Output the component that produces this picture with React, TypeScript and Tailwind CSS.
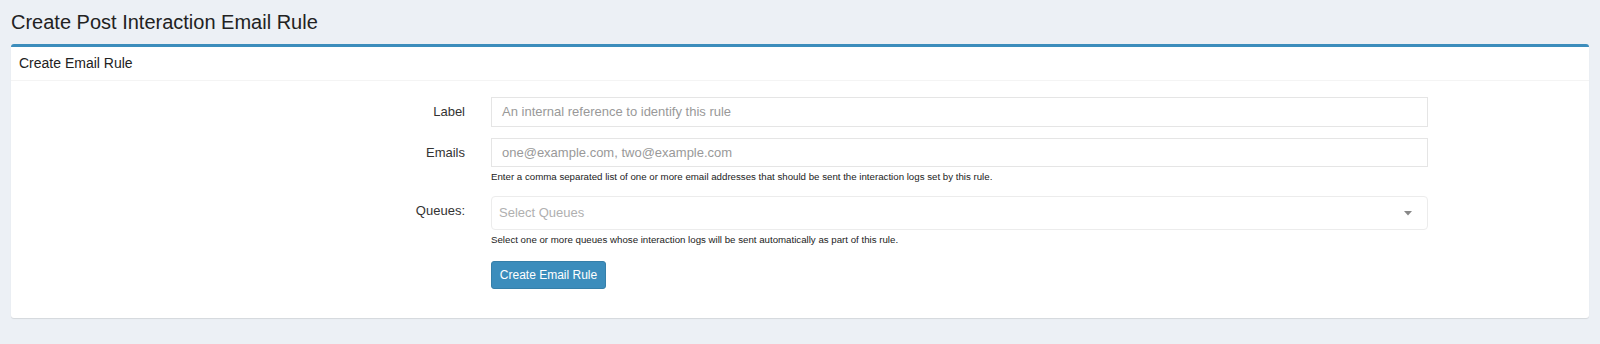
import React from 'react';

function FormRow({ label, children }: { label: string; children: React.ReactNode }) {
  return (
    <div className="flex items-start">
      <div className="w-[454px] shrink-0 text-right text-[13px] text-[#333] leading-[30px]">{label}</div>
      <div className="ml-[26px] w-[937px]">{children}</div>
    </div>
  );
}

export default function App() {
  return (
    <div
      className="min-h-[344px] w-full bg-[#ecf0f5] px-[11px] pt-[10px] pb-[27px] text-[#333]"
      style={{ fontFamily: '"Liberation Sans", Arial, Helvetica, sans-serif' }}
    >
      <h1 className="text-[20px] leading-[24px] text-[#222]">Create Post Interaction Email Rule</h1>

      <div className="mt-[10px] rounded-[3px] border-t-[3px] border-[#3c8dbc] bg-white shadow-[0_1px_1px_rgba(0,0,0,0.1)]">
        <div className="h-[34px] border-b border-[#f4f4f4] px-[8px] text-[14px] leading-[32px] text-[#222]">
          Create Email Rule
        </div>

        <div className="flex flex-col pt-[16px] pb-[29px]">
          <FormRow label="Label">
            <div className="h-[30px] border border-[#e5e5e5] px-[10px] text-[13px] leading-[28px] text-[#999]">
              An internal reference to identify this rule
            </div>
          </FormRow>

          <div className="mt-[11px]">
            <FormRow label="Emails">
              <div className="h-[29px] border border-[#e5e5e5] px-[10px] text-[13px] leading-[27px] text-[#999]">
                one@example.com, two@example.com
              </div>
              <div className="mt-[3px] text-[9.7px] leading-[14px] text-[#222]">
                Enter a comma separated list of one or more email addresses that should be sent the interaction logs set by this rule.
              </div>
            </FormRow>
          </div>

          <div className="mt-[12px]">
            <FormRow label="Queues:">
              <div className="flex h-[34px] items-center justify-between rounded-[4px] border border-[#ececec] pl-[7px] pr-[15px]">
                <span className="text-[13px] text-[#b0b0b0]">Select Queues</span>
                <svg width="8" height="5" viewBox="0 0 8 5">
                  <path d="M0 0 L8 0 L4 4.5 Z" fill="#888" />
                </svg>
              </div>
              <div className="mt-[3px] text-[9.7px] leading-[14px] text-[#222]">
                Select one or more queues whose interaction logs will be sent automatically as part of this rule.
              </div>
              <button className="mt-[14px] h-[28px] w-[115px] rounded-[3px] border border-[#367fa9] bg-[#3c8dbc] text-[12px] text-white">
                Create Email Rule
              </button>
            </FormRow>
          </div>
        </div>
      </div>
    </div>
  );
}
